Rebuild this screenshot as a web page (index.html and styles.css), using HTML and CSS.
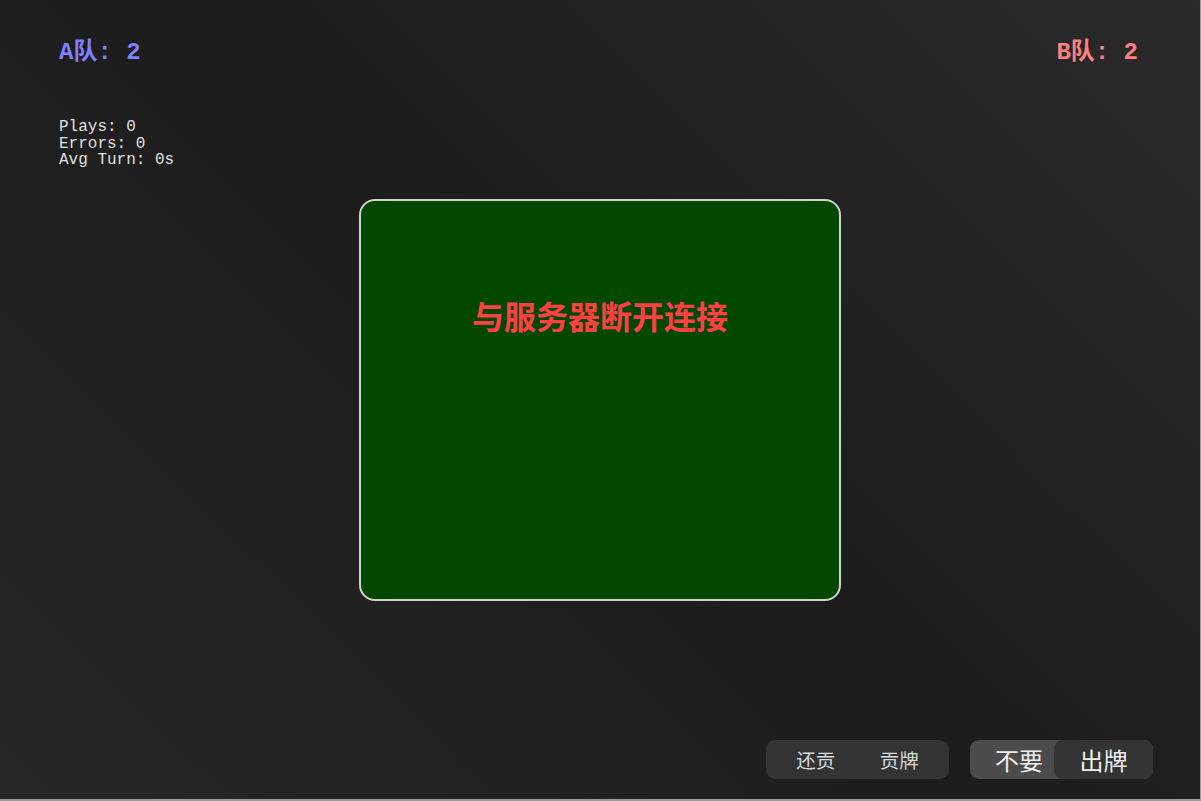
FILE: index.html
```html
<!DOCTYPE html>
<html lang="zh">
<head>
<meta charset="utf-8">
<title>Game</title>
<link rel="stylesheet" href="styles.css">
</head>
<body>
<div class="screen">
  <div class="top">
    <div class="scores">
      <div class="team team-a">A队: 2</div>
      <div class="team team-b">B队: 2</div>
    </div>
    <div class="stats">
      <div>Plays: 0</div>
      <div>Errors: 0</div>
      <div>Avg Turn: 0s</div>
    </div>
  </div>
  <div class="table">
    <div class="message">与服务器断开连接</div>
  </div>
  <div class="bottom">
    <div class="group group-tribute">
      <button class="btn small">还贡</button>
      <button class="btn small">贡牌</button>
    </div>
    <div class="group group-play">
      <button class="btn big pass">不要</button>
      <button class="btn big play">出牌</button>
    </div>
  </div>
</div>
</body>
</html>
```
FILE: styles.css
```css
html {
  margin: 0;
  background: #9c9c9c;
}
body {
  margin: 0;
  width: 1200px;
  height: 799px;
}
.screen {
  width: 1200px;
  height: 799px;
  background: linear-gradient(45deg, #262626 0%, #1c1c1c 50%, #2a2a2a 100%);
  display: grid;
  grid-template-rows: 1fr auto 1fr;
  justify-items: center;
  font-family: "Liberation Mono", "Noto Sans CJK SC", monospace;
}
.top {
  width: 100%;
  box-sizing: border-box;
  padding: 39px 62px 0 59px;
}
.scores {
  display: flex;
  justify-content: space-between;
  align-items: center;
}
.team {
  font-size: 24px;
  font-weight: bold;
  line-height: 28px;
}
.team-a { color: #8080ff; }
.team-b { color: #ff8080; }
.stats {
  margin-top: 52px;
  color: #e0e0e0;
  font-size: 16px;
  line-height: 16.5px;
}
.table {
  box-sizing: border-box;
  width: 482px;
  height: 402px;
  border: 2px solid #d2d2d2;
  border-radius: 16px;
  background: #004800;
  display: flex;
  justify-content: center;
}
.message {
  margin-top: 91px;
  font-family: "Noto Sans CJK SC", sans-serif;
  font-weight: bold;
  font-size: 32px;
  line-height: 46px;
  color: #ff4040;
}
.bottom {
  width: 100%;
  box-sizing: border-box;
  padding: 0 47px 20px 0;
  display: flex;
  justify-content: flex-end;
  align-items: flex-end;
  gap: 21px;
}
.group {
  display: flex;
  height: 39px;
  border-radius: 9px;
  overflow: hidden;
}
.group-tribute {
  width: 183px;
  box-sizing: border-box;
  padding: 0 8px;
  background: #333333;
}
.group-play {
  width: 183px;
  background: #4b4b4b;
}
.btn {
  border: none;
  margin: 0;
  padding: 0;
  background: transparent;
  font-family: "Noto Sans CJK SC", sans-serif;
  cursor: pointer;
}
.btn.small {
  flex: 1;
  font-size: 19.5px;
  color: #d8d8d8;
}
.btn.big {
  font-size: 24px;
  color: #eeeeee;
}
.pass {
  width: 84px;
  padding-left: 14px;
  color: #ffffff;
}
.play {
  flex: 1;
  background: #333333;
  border-radius: 9px;
}
```
